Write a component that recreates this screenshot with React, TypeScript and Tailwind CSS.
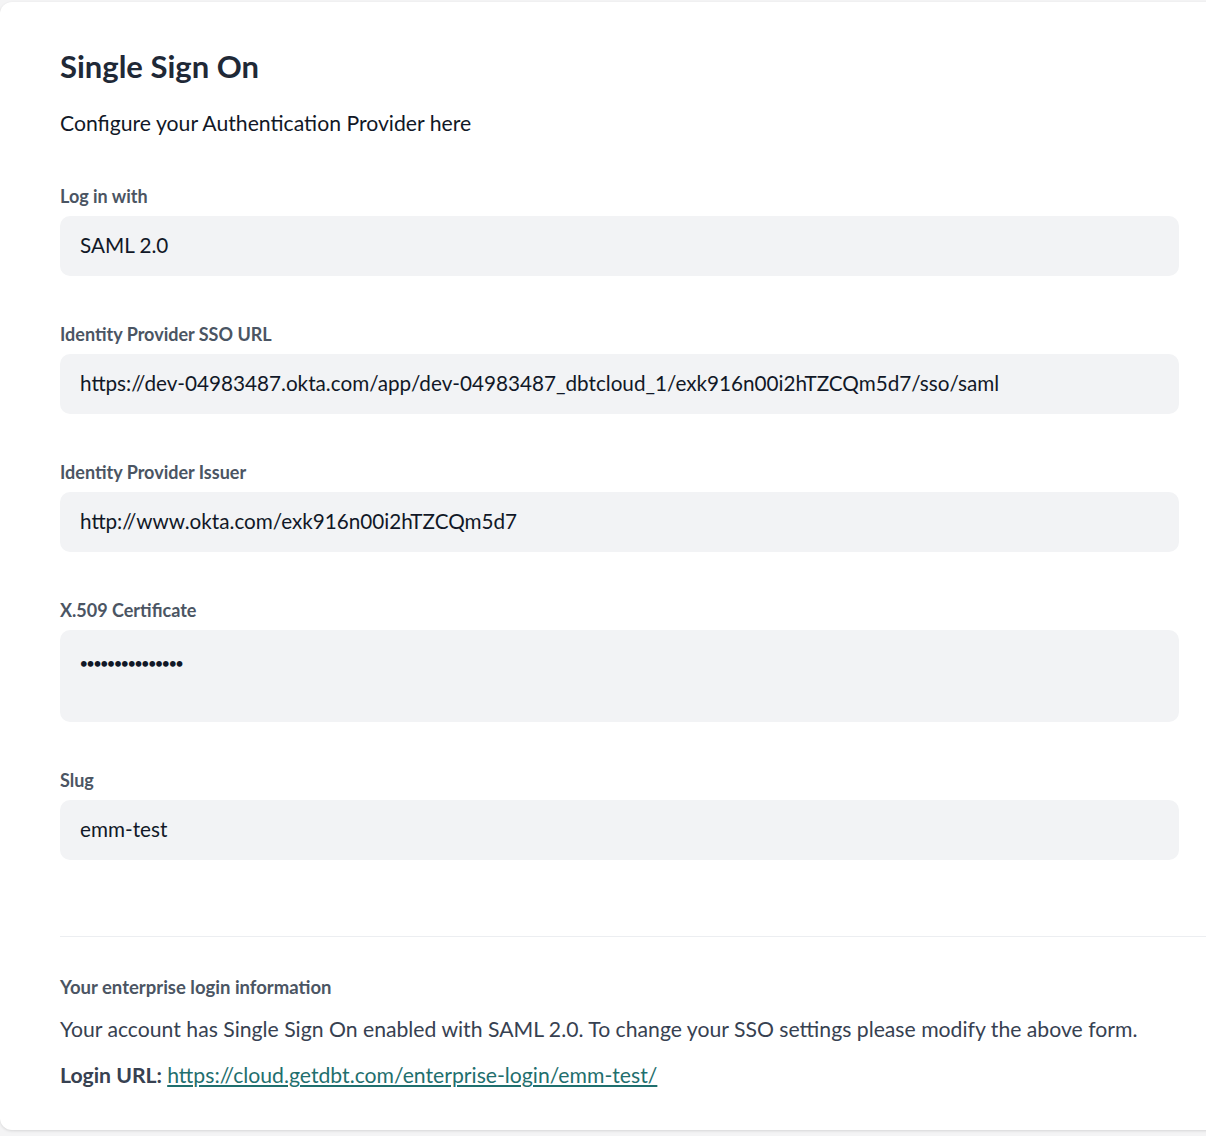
import React from "react";

const fields = [
  { label: "Log in with", value: "SAML 2.0" },
  {
    label: "Identity Provider SSO URL",
    value:
      "https://dev-04983487.okta.com/app/dev-04983487_dbtcloud_1/exk916n00i2hTZCQm5d7/sso/saml",
  },
  { label: "Identity Provider Issuer", value: "http://www.okta.com/exk916n00i2hTZCQm5d7" },
];

const Field = ({ label, value }: { label: string; value: string }) => (
  <div className="flex flex-col mb-[46px]">
    <span className="text-[18px] leading-6 font-bold text-[#4b5563] mb-2">{label}</span>
    <div className="h-[60px] flex items-center pl-5 rounded-[10px] bg-[#f2f3f5] text-[20.7px] text-[#111827]">
      {value}
    </div>
  </div>
);

export default function App() {
  return (
    <div
      className="min-h-[1136px] bg-[#f4f4f5] pt-[2px] overflow-hidden"
      style={{ fontFamily: "Lato, 'Liberation Sans', sans-serif" }}
    >
      <div className="bg-white rounded-l-xl shadow-[0_1px_3px_rgba(0,0,0,0.12)] w-[1220px] h-[1128px] pl-[60px] pt-[44px]">
        <div className="w-[1119px]">
          <h1 className="text-[31px] leading-10 font-bold text-[#1f2937]">Single Sign On</h1>
          <p className="mt-[23px] text-[21.2px] leading-7 text-[#111827]">
            Configure your Authentication Provider here
          </p>
          <div className="mt-[47px]">
            {fields.map((f) => (
              <Field key={f.label} {...f} />
            ))}
            <div className="flex flex-col mb-[46px]">
              <span className="text-[18px] leading-6 font-bold text-[#4b5563] mb-2">
                X.509 Certificate
              </span>
              <div className="h-[92px] pl-5 pt-[21px] rounded-[10px] bg-[#f2f3f5] text-[13px] leading-6 text-[#111827] tracking-[-0.7px] font-bold">
                •••••••••••••••
              </div>
            </div>
            <div className="flex flex-col">
              <span className="text-[18px] leading-6 font-bold text-[#4b5563] mb-2">Slug</span>
              <div className="h-[60px] flex items-center pl-5 rounded-[10px] bg-[#f2f3f5] text-[20.7px] text-[#111827]">
                emm-test
              </div>
            </div>
          </div>
        </div>
        <div className="mt-[76px] border-t border-[#eceef1]" />
        <div className="pt-[38px]">
          <h2 className="text-[18.5px] leading-6 font-bold text-[#4b5563]">
            Your enterprise login information
          </h2>
          <p className="mt-[16px] text-[21.2px] leading-7 text-[#374151]">
            Your account has Single Sign On enabled with SAML 2.0. To change your SSO settings please
            modify the above form.
          </p>
          <p className="mt-[18px] text-[21.2px] leading-7 text-[#374151]">
            <span className="font-bold">Login URL: </span>
            <a href="#" className="text-[#1f6f6e] underline underline-offset-2">
              https://cloud.getdbt.com/enterprise-login/emm-test/
            </a>
          </p>
        </div>
      </div>
    </div>
  );
}
